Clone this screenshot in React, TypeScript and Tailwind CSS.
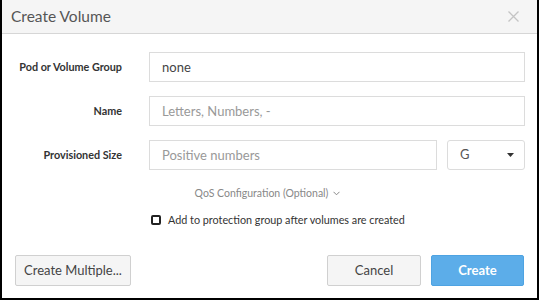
import React from 'react'

const labelCls = 'text-right text-[10.8px] font-bold text-[#333]'
const inputCls = 'h-[30px] w-full border border-[#dcdcdc] bg-white px-3 text-[13px] text-[#444] placeholder:text-[#999] outline-none'

const App = () => {
    return (
        <main className="w-[540px] h-[302px] bg-white" style={{ fontFamily: 'Lato, "Open Sans", sans-serif' }}>
            <div className="w-[539px] h-[300px] border-l-2 border-r-2 border-b-2 border-black flex flex-col">
                <div className="h-[34px] bg-[#f5f5f5] border-b border-[#d6d6d6] flex items-center justify-between pl-[9px] pr-[18px]">
                    <h1 className="text-[15.5px] text-[#555]">Create Volume</h1>
                    <svg width="11" height="11" viewBox="0 0 11 11" stroke="#c4c4c4" strokeWidth="1.3">
                        <path d="M0.5 0.5 L10.5 10.5 M10.5 0.5 L0.5 10.5" />
                    </svg>
                </div>

                <div className="pt-[18px] pr-[12px] grid grid-cols-[120px_1fr] gap-x-[27px] gap-y-[14px] items-center">
                    <span className={labelCls}>Pod or Volume Group</span>
                    <input className={inputCls} defaultValue="none" />

                    <span className={labelCls}>Name</span>
                    <input className={inputCls} placeholder="Letters, Numbers, -" />

                    <span className={labelCls}>Provisioned Size</span>
                    <div className="flex gap-[10px]">
                        <input className={inputCls + ' flex-1'} placeholder="Positive numbers" />
                        <div className="w-[78px] h-[30px] border border-[#dcdcdc] rounded-[3px] flex items-center justify-between pl-[12px] pr-[10px] text-[13px] text-[#555]">
                            <span>G</span>
                            <svg width="7" height="4" viewBox="0 0 7 4"><path d="M0 0 L7 0 L3.5 4 Z" fill="#333" /></svg>
                        </div>
                    </div>
                </div>

                <div className="mt-[16px] flex justify-center items-center gap-[5px] text-[10.5px] text-[#888] pr-[4px]">
                    <span>QoS Configuration (Optional)</span>
                    <svg width="7" height="5" viewBox="0 0 7 5" fill="none" stroke="#888" strokeWidth="1"><path d="M0.5 0.8 L3.5 3.8 L6.5 0.8" /></svg>
                </div>

                <label className="mt-[10px] ml-[149px] flex items-center gap-[7px] text-[10.8px] text-[#333]">
                    <span className="w-[10px] h-[10px] border-2 border-[#222] rounded-[2px]" />
                    <span>Add to protection group after volumes are created</span>
                </label>

                <div className="mt-auto mb-[12px] px-[13px] flex items-center">
                    <button className="h-[31px] w-[116px] border border-[#d0d0d0] bg-[#f5f5f5] rounded-[2px] text-[13px] text-[#444]">Create Multiple...</button>
                    <div className="ml-auto flex gap-[10px]">
                        <button className="h-[31px] w-[94px] border border-[#d0d0d0] bg-[#f5f5f5] rounded-[2px] text-[13px] text-[#444]">Cancel</button>
                        <button className="h-[31px] w-[93px] bg-[#5cade9] border border-[#4ea3e2] rounded-[2px] text-[13px] font-bold text-white">Create</button>
                    </div>
                </div>
            </div>
        </main>
    )
}

export default App
